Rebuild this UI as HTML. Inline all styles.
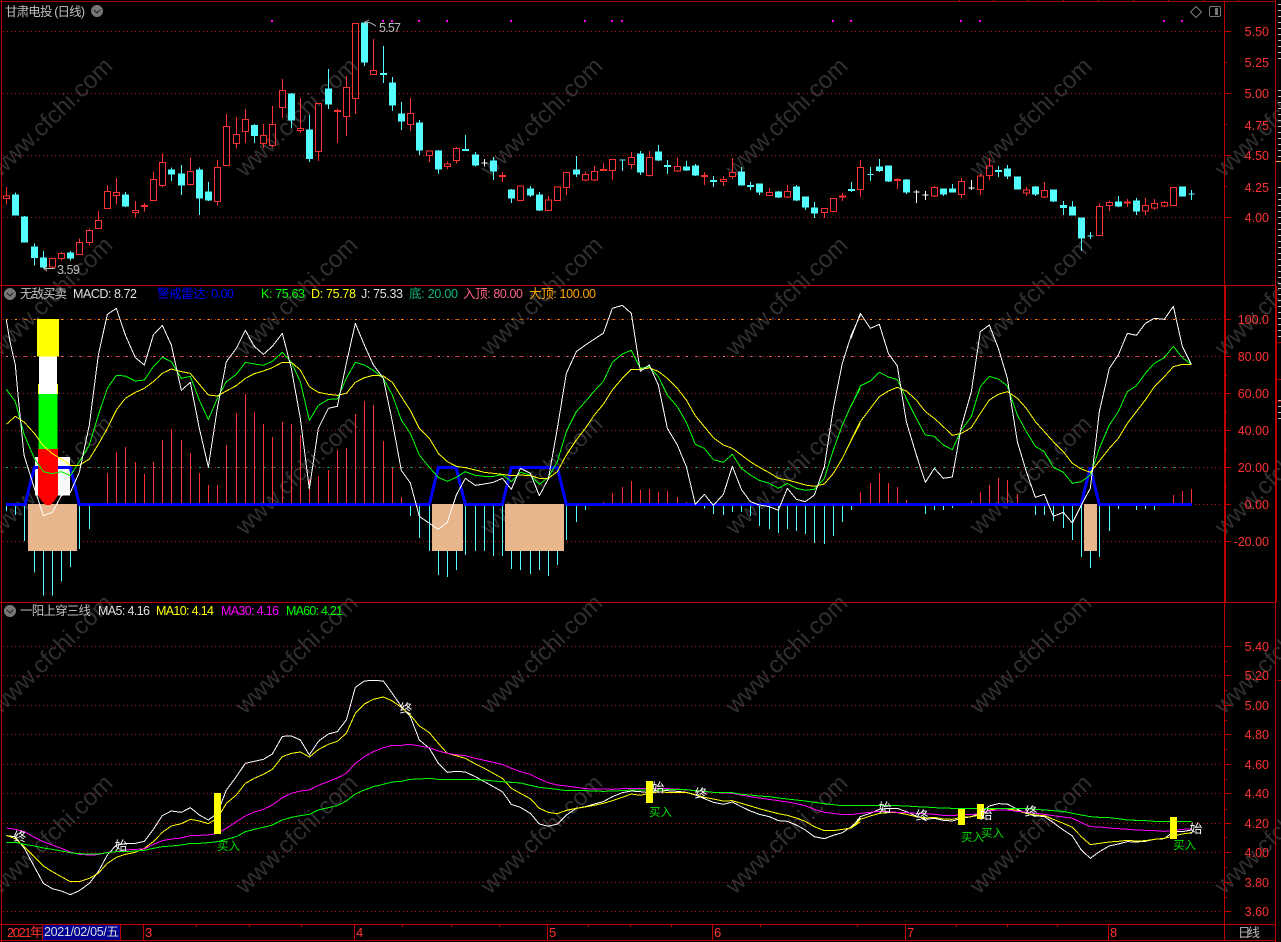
<!DOCTYPE html>
<html lang="zh"><head><meta charset="utf-8"><title>甘肃电投 (日线)</title>
<style>
html,body{margin:0;padding:0;background:#000;overflow:hidden;width:1281px;height:942px}
svg{display:block;position:absolute;left:0;top:0}
text{font-family:"Liberation Sans","Noto Sans CJK SC",sans-serif;shape-rendering:auto}
.k{fill:none;stroke-width:3}
.l{fill:none;stroke-width:3;stroke-linejoin:round}
.r{stroke:#ff3232;fill:none;stroke-width:3}
.c{stroke:#54ffff;fill:#54ffff;stroke-width:3}
.w{stroke:#fff;fill:#fff;stroke-width:3}
.bl{stroke:#0000ff;stroke-width:9;fill:none}
.ye{stroke:#ffff00}.wh{stroke:#fff}.gr{stroke:#00ff00}.ma{stroke:#ff00ff}
.ax{font-size:12.5px;fill:#ff3232;text-anchor:end}
.hd{font-size:12.5px}
.sg{font-size:12.5px;fill:#fff;text-anchor:middle}
.by{font-size:11.5px;fill:#00e000}
.mark{font-size:24px;fill:#303030}
</style></head><body>
<svg width="1281" height="942" viewBox="0 0 1281 942" shape-rendering="crispEdges" xmlns="http://www.w3.org/2000/svg">
<rect width="1281" height="942" fill="#000"/>

<!-- watermark -->
<g class="mark">
<text transform="translate(0,178) rotate(-44)">www.cfchi.com</text>
<text transform="translate(245,178) rotate(-44)">www.cfchi.com</text>
<text transform="translate(490,178) rotate(-44)">www.cfchi.com</text>
<text transform="translate(735,178) rotate(-44)">www.cfchi.com</text>
<text transform="translate(979,178) rotate(-44)">www.cfchi.com</text>
<text transform="translate(1224,178) rotate(-44)">www.cfchi.com</text>
<text transform="translate(0,357) rotate(-44)">www.cfchi.com</text>
<text transform="translate(245,357) rotate(-44)">www.cfchi.com</text>
<text transform="translate(490,357) rotate(-44)">www.cfchi.com</text>
<text transform="translate(735,357) rotate(-44)">www.cfchi.com</text>
<text transform="translate(979,357) rotate(-44)">www.cfchi.com</text>
<text transform="translate(1224,357) rotate(-44)">www.cfchi.com</text>
<text transform="translate(0,536) rotate(-44)">www.cfchi.com</text>
<text transform="translate(245,536) rotate(-44)">www.cfchi.com</text>
<text transform="translate(490,536) rotate(-44)">www.cfchi.com</text>
<text transform="translate(735,536) rotate(-44)">www.cfchi.com</text>
<text transform="translate(979,536) rotate(-44)">www.cfchi.com</text>
<text transform="translate(1224,536) rotate(-44)">www.cfchi.com</text>
<text transform="translate(0,715) rotate(-44)">www.cfchi.com</text>
<text transform="translate(245,715) rotate(-44)">www.cfchi.com</text>
<text transform="translate(490,715) rotate(-44)">www.cfchi.com</text>
<text transform="translate(735,715) rotate(-44)">www.cfchi.com</text>
<text transform="translate(979,715) rotate(-44)">www.cfchi.com</text>
<text transform="translate(1224,715) rotate(-44)">www.cfchi.com</text>
<text transform="translate(0,895) rotate(-44)">www.cfchi.com</text>
<text transform="translate(245,895) rotate(-44)">www.cfchi.com</text>
<text transform="translate(490,895) rotate(-44)">www.cfchi.com</text>
<text transform="translate(735,895) rotate(-44)">www.cfchi.com</text>
<text transform="translate(979,895) rotate(-44)">www.cfchi.com</text>
<text transform="translate(1224,895) rotate(-44)">www.cfchi.com</text>
</g>

<!-- grid -->
<g fill="none" stroke="#bb1414" stroke-width="1" stroke-dasharray="1 3">
<path d="M3 31.5H1222M3 93.5H1222M3 155.5H1222M3 217.5H1222"/>
<path d="M3 319.5H1222M3 356.5H1222M3 393.5H1222M3 430.5H1222M3 467.5H1222M3 541.5H1222"/>
<path d="M3 646.5H1222M3 675.5H1222M3 705.5H1222M3 734.5H1222M3 764.5H1222M3 793.5H1222M3 823.5H1222M3 852.5H1222M3 882.5H1222M3 911.5H1222"/>
<path d="M1191 504.5H1222"/>
</g>
<g fill="none" stroke-width="1" stroke-dasharray="2 7.19">
<path d="M6 319.5H1192" stroke="#ff9a10"/>
<path d="M6 356.5H1192" stroke="#ff6688"/>
<path d="M6 467.5H1192" stroke="#10b878"/>
</g>

<!-- magenta dots -->
<path fill="#ff00ff" d="M271 20h2v2h-2zM382 20h2v2h-2zM391 20h2v2h-2zM418 20h2v2h-2zM446 20h2v2h-2zM510 20h2v2h-2zM584 20h2v2h-2zM611 20h2v2h-2zM621 20h2v2h-2zM832 20h2v2h-2zM850 20h2v2h-2zM960 20h2v2h-2zM979 20h2v2h-2zM1163 20h2v2h-2zM1181 20h2v2h-2z"/>

<!-- candles -->
<g transform="scale(.33333)">
<path class="r" d="M19 561V588M19 596V614M10 588H28V596H10ZM148 775H166V801H148ZM157 801V805M184 756V760M184 776V782M175 760H193V776H175ZM238 715V727M229 727H247V764H229ZM268 685V691M268 728V737M259 691H277V728H259ZM295 633V661M286 661H304V685H286ZM322 556V574M313 574H331V626H313ZM349 534V577M349 586V614M340 577H358V586H340ZM406 603V631M406 637V652M397 631H415V637H397ZM433 609V635M424 616H442V619H424ZM460 514V538M451 538H469V602H451ZM487 460V487M487 557V561M478 487H496V557H478ZM571 472V514M571 554V557M562 514H580V554H562ZM652 480V502M652 605V617M643 502H661V605H643ZM679 342V379M670 379H688V497H670ZM709 351V403M709 431V446M700 403H718V431H700ZM736 327V358M736 394V429M727 358H745V394H727ZM790 372V406M790 431V444M781 406H799V431H781ZM817 318V373M817 437V443M808 373H826V437H808ZM847 237V271M847 323V354M838 271H856V323H838ZM901 294V385M901 392V399M892 385H910V392H892ZM946 310H964V455H946ZM955 455V483M1012 325V429M1003 331H1021V334H1003ZM1039 228V262M1039 350V408M1030 262H1048V350H1030ZM1057 70H1075V296H1057ZM1066 296V342M1120 117V211M1111 211H1129V224H1111ZM1231 294V340M1231 374V393M1222 340H1240V374H1222ZM1279 453H1297V467H1279ZM1288 467V486"/>
<path class="c" d="M46 577V647M37 585H55V645H37ZM73 648V728M64 651H82V726H64ZM103 730V797M94 741H112V773H94ZM130 753V805M121 774H139V801H121ZM211 753V782M202 759H220V774H202ZM376 576V621M367 585H385V618H367ZM514 502V543M505 510H523V522H505ZM544 495V585M535 522H553V555H535ZM598 502V645M589 510H607V594H589ZM625 546V603M616 576H634V600H616ZM763 372V429M754 376H772V407H754ZM874 279V384M865 282H883V360H865ZM928 345V486M919 390H937V476H919ZM985 207V327M976 267H994V312H976ZM1093 69V198M1084 69H1102V186H1084ZM1150 138V249M1141 220H1159V223H1141ZM1177 231V333M1168 249H1186V315H1168ZM1204 306V390M1195 342H1213V363H1195ZM1258 360V465M1249 369H1267V450H1249Z"/>
</g>
<g transform="translate(430,0) scale(.33333)">
<path class="r" d="M52 484V492M52 500V507M43 492H61V500H43ZM79 441V445M79 482V491M70 445H88V482H70ZM217 516V546M208 526H226V529H208ZM271 556V558M262 558H280V602H262ZM355 588V600M346 600H364V632H346ZM373 561H391V602H373ZM409 514V517M409 563V585M400 517H418V563H400ZM466 514V523M466 540V545M457 523H475V540H457ZM493 498V514M493 540V543M484 514H502V540H484ZM520 489V513M511 509H529V512H511ZM547 477V478M547 512V540M538 478H556V512H538ZM604 456V472M604 494V507M595 472H613V494H595ZM658 453V472M658 527V530M649 472H667V527H649ZM742 472V500M742 513V516M733 500H751V513H733ZM823 516V555M814 526H832V529H814ZM880 528V538M880 544V558M871 538H889V544H871ZM907 474V517M907 530V537M898 517H916V530H898ZM1018 564V577M1018 586V588M1009 577H1027V586H1009ZM1072 555V574M1072 591V594M1063 574H1081V591H1063ZM1174 625H1192V638H1174ZM1183 638V654M1201 595H1219V635H1201ZM1237 579V603M1228 588H1246V591H1228Z"/>
<path class="c" d="M25 450V522M16 453H34V507H16ZM106 405V453M97 448H115V451H97ZM136 456V500M127 465H145V495H127ZM190 471V540M181 483H199V513H181ZM244 567V609M235 570H253V594H235ZM301 558V591M292 567H310V585H292ZM328 576V633M319 585H337V630H319ZM439 468V531M430 510H448V522H430ZM577 478V513M568 480H586M631 453V525M622 462H640V516H622ZM685 435V483M676 456H694V480H676ZM712 480V522M703 496H721V499H703ZM769 483V513M760 501H778V510H760ZM796 492V528M787 498H805V525H787ZM850 528V561M841 542H859V544H841ZM934 501V555M925 516H943V555H925ZM961 546V570M952 556H970V559H952ZM988 552V585M979 552H997V576H979ZM1045 573V594M1036 576H1054V591H1036ZM1099 555V603M1090 561H1108V600H1090ZM1126 591V630M1117 591H1135V621H1117ZM1153 606V654M1144 624H1162V639H1144ZM1264 546V576M1255 568H1273V571H1255Z"/>
<path class="w" d="M163 477V500M154 489H172"/>
</g>
<g transform="translate(851,0) scale(.33333)">
<path class="r" d="M28 480V502M28 569V591M19 502H37V569H19ZM139 534V567M130 539H148V542H130ZM250 558V562M250 588V591M241 562H259V588H241ZM331 534V544M331 584V594M322 544H340V584H322ZM388 522V528M388 569V585M379 528H397V569H379ZM415 474V498M415 527V540M406 498H424V527H406ZM526 561V570M526 579V588M517 570H535V579H517ZM580 546V571M580 591V594M571 571H589V591H571ZM745 610V619M736 619H754V707H736ZM775 603V607M775 617V633M766 607H784V617H766ZM829 597V621M820 606H838V609H820ZM883 594V616M883 633V645M874 616H892V633H874ZM910 597V610M910 624V630M901 610H919V624H901ZM940 603V607M940 618V621M931 607H949V618H931ZM958 562H976V617H958Z"/>
<path class="c" d="M58 501V543M49 524H67M85 477V516M76 501H94V511H76ZM112 498V546M103 498H121V543H103ZM166 537V582M157 540H175V576H157ZM277 567V588M268 567H286V582H268ZM304 552V576M295 567H313V576H295ZM442 498V531M433 512H451V514H433ZM469 495V537M460 507H478V528H460ZM490 531H508V567H490ZM553 558V588M544 561H562V582H544ZM607 570V606M598 570H616V603H598ZM637 603V645M628 616H646V622H628ZM664 603V645M655 621H673V645H655ZM691 654V753M682 654H700V714H682ZM718 696V717M709 708H727M802 588V621M793 606H811V618H793ZM856 594V645M847 603H865V633H847ZM985 561H1003V588H985ZM1021 570V600M1012 582H1030"/>
<path class="w" d="M196 570V609M187 576H205M223 573V600M214 585H232M361 540V570M352 564H370"/>
</g>

<!-- hi/lo annotations -->
<g fill="none" stroke="#bbb" stroke-width="1">
<path d="M44 268.5H55M47 266l-3 2.5 3 2.5"/>
<path d="M376 26l-5-3-6-1M369 20l-4 2 2 3"/>
</g>
<text x="57" y="274" font-size="12.5" fill="#bbb" textLength="23">3.59</text>
<text x="379" y="32" font-size="12.5" fill="#bbb" textLength="22">5.57</text>

<!-- pane 2 bars -->
<g transform="translate(0,285) scale(.33333)">
<path class="k" stroke="#ff3232" d="M322 655V564M349 655V501M376 655V486M406 655V531M433 655V567M460 655V531M487 655V465M514 655V432M544 655V465M571 655V504M598 655V564M625 655V600M652 655V600M679 655V480M709 655V384M736 655V327M763 655V381M790 655V417M817 655V456M847 655V411M874 655V417M901 655V450M928 655V582M955 655V573M985 655V555M1012 655V495M1039 655V489M1066 655V387M1093 655V348M1120 655V360M1150 655V468M1177 655V549M1204 655V636"/>
<path class="k" stroke="#54ffff" d="M19 660V678M46 660V690M73 660V768M103 660V863M130 660V932M157 660V932M184 660V890M211 660V846M238 660V792M268 660V732M1231 660V693M1258 660V759M1288 660V798"/>
</g>
<g transform="translate(430,285) scale(.33333)">
<path class="k" stroke="#ff3232" d="M520 655V651M547 655V624M577 655V606M604 655V588M631 655V615M658 655V612M685 655V621M712 655V618M742 655V636M769 655V651"/>
<path class="k" stroke="#54ffff" d="M25 660V870M52 660V876M79 660V855M106 660V810M136 660V798M163 660V798M190 660V813M217 660V813M244 660V852M271 660V855M301 660V867M328 660V855M355 660V873M382 660V840M409 660V765M439 660V711M466 660V675M823 660V670M850 660V687M880 660V690M907 660V681M934 660V681M961 660V693M988 660V723M1018 660V732M1045 660V744M1072 660V732M1099 660V738M1126 660V747M1153 660V774M1183 660V777M1210 660V753M1237 660V711M1264 660V675"/>
</g>
<g transform="translate(851,285) scale(.33333)">
<path class="k" stroke="#ff3232" d="M28 655V621M58 655V594M85 655V564M112 655V594M139 655V606M166 655V645M361 655V648M388 655V621M415 655V600M442 655V579M469 655V585M499 655V627M967 655V630M994 655V618M1021 655V612"/>
<path class="k" stroke="#54ffff" d="M1 660V675M223 660V687M250 660V675M277 660V675M304 660V669M553 660V690M580 660V690M607 660V708M637 660V729M664 660V765M691 660V816M718 660V849M745 660V816M775 660V738M802 660V672M856 660V675M883 660V672M910 660V675"/>
</g>

<!-- pane 2 blocks and blue line -->
<g transform="translate(0,285) scale(.33333)">
<rect x="105" y="516" width="105" height="116" fill="#f8f8f8"/>
<path class="bl" d="M18 658.5H75L103 547H211L238 658.5H1290"/>
<rect x="84" y="657" width="147" height="141" fill="#e8b68c"/>
<rect x="111" y="102" width="66" height="113" fill="#ffff00"/>
<rect x="114" y="297" width="60" height="30" fill="#ffff00"/>
<rect x="117" y="215" width="54" height="112" fill="#fff"/>
<rect x="116" y="327" width="56" height="165" fill="#00ff00"/>
<path fill="#ff0000" d="M114 492H174V628Q165 650 150 660H138Q123 650 114 628Z"/>
</g>
<g transform="translate(430,285) scale(.33333)">
<path class="bl" d="M-2 658.5L25 547H78L106 658.5H217L244 547H382L409 658.5H1291"/>
<rect x="6" y="657" width="93" height="141" fill="#e8b68c"/>
<rect x="225" y="657" width="177" height="141" fill="#e8b68c"/>
</g>
<g transform="translate(851,285) scale(.33333)">
<path class="bl" d="M0 658.5H690L718 547L745 658.5H1023"/>
<rect x="699" y="657" width="39" height="141" fill="#e8b68c"/>
</g>

<!-- pane 2 lines -->
<g transform="translate(0,285) scale(.33333)">
<polyline class="l gr" points="19,313 46,350 73,450 103,520 130,560 157,566 184,560 211,572 238,530 268,480 295,390 322,310 349,271 376,273 406,288 433,285 460,245 487,217 514,230 544,280 571,274 598,345 625,404 652,340 679,290 709,268 736,232 763,237 790,241 817,229 847,202 874,232 901,290 928,406 955,361 985,343 1012,342 1039,280 1066,232 1093,240 1120,256 1150,280 1177,330 1204,405 1231,445 1258,510 1288,547"/>
<polyline class="l ye" points="19,418 46,394 73,412 103,445 130,482 157,506 184,522 211,541 238,541 268,522 295,478 322,430 349,375 376,340 406,322 433,310 460,290 487,265 514,252 544,260 571,265 598,298 625,330 652,333 679,318 709,302 736,280 763,266 790,258 817,248 847,232 874,232 901,255 928,305 955,322 985,328 1012,331 1039,325 1066,292 1093,278 1120,271 1150,273 1177,292 1204,335 1231,376 1258,430 1288,460"/>
<polyline class="l wh" points="19,105 30,170 46,240 55,340 72,510 100,600 130,692 157,682 184,632 211,622 238,562 268,420 295,210 322,88 349,70 376,150 406,218 433,240 460,150 487,121 514,180 544,316 571,292 598,430 625,546 652,370 679,230 709,190 736,136 763,184 790,208 817,184 847,145 874,250 901,400 928,612 955,430 985,370 1012,364 1039,235 1066,115 1093,180 1120,240 1150,280 1177,410 1204,556 1231,594 1258,694 1288,715"/>
</g>
<g transform="translate(430,285) scale(.33333)">
<polyline class="l gr" points="-2,547 25,577 52,589 79,577 106,560 136,571 163,574 190,574 217,569 244,590 271,562 301,570 328,598 355,577 382,530 409,440 439,380 466,350 493,318 520,289 547,232 577,207 604,196 631,250 658,245 685,275 712,330 742,365 769,412 796,478 823,490 850,524 880,532 907,508 934,550 961,570 988,586 1018,595 1045,610 1072,595 1099,610 1126,616 1153,613 1183,580 1210,495 1237,420 1264,360 1291,310"/>
<polyline class="l ye" points="-2,460 25,505 52,530 79,544 106,548 136,555 163,562 190,565 217,568 244,572 271,570 301,572 328,580 355,580 382,560 409,510 439,465 466,430 493,390 520,358 547,315 577,280 604,253 631,253 658,249 685,259 712,280 742,310 769,345 796,392 823,425 850,458 880,480 907,490 934,510 961,530 988,547 1018,563 1045,580 1072,585 1099,592 1126,600 1153,604 1183,597 1210,565 1237,520 1264,465 1291,415"/>
<polyline class="l wh" points="-2,715 25,733 52,712 79,630 106,580 136,601 163,597 190,592 217,580 244,613 271,550 301,565 328,632 355,582 382,430 409,265 439,200 466,180 493,162 520,145 547,70 577,61 604,85 631,259 658,240 685,300 712,430 742,480 769,545 796,658 823,628 850,661 880,628 907,544 934,613 961,650 988,660 1018,665 1045,676 1072,610 1099,643 1126,650 1153,630 1183,545 1210,370 1237,235 1264,150 1291,90"/>
</g>
<g transform="translate(851,285) scale(.33333)">
<polyline class="l gr" points="0,365 28,303 58,288 85,262 112,276 139,284 166,340 196,400 223,450 250,454 277,480 304,494 331,435 361,395 388,305 415,274 442,282 469,303 499,390 526,440 553,484 580,500 607,547 637,562 664,595 691,590 718,570 745,490 775,420 802,380 829,320 856,302 883,265 910,235 940,218 967,184 994,218 1021,238"/>
<polyline class="l ye" points="0,465 28,410 58,370 85,335 112,318 139,307 166,318 196,345 223,380 250,400 277,425 304,451 331,445 361,428 388,385 415,345 442,328 469,320 499,340 526,370 553,410 580,440 607,470 637,500 664,535 691,552 718,562 745,528 775,490 802,460 829,415 856,380 883,345 910,305 940,275 967,245 994,238 1021,238"/>
<polyline class="l wh" points="0,160 28,85 58,130 85,118 112,205 139,243 166,410 196,510 223,592 250,550 277,580 304,576 331,425 361,320 388,140 415,120 442,190 469,280 499,470 526,560 553,637 580,628 607,694 637,682 664,714 691,660 718,610 745,380 775,250 802,210 829,145 856,151 883,115 910,100 940,103 967,64 994,184 1021,238"/>
</g>

<!-- pane 3 lines -->
<g transform="translate(0,600) scale(.33333)">
<polyline class="l wh" points="19,707 45,710 73,745 103,800 130,850 157,866 184,873 211,884 238,872 268,850 295,815 322,765 349,735 376,731 406,730 433,724 460,688 487,647 514,633 544,637 571,623 598,645 625,660 652,640 679,570 709,530 736,490 763,484 790,478 817,462 847,409 874,408 901,420 928,465 955,424 985,402 1012,395 1039,360 1066,262 1093,243 1120,241 1150,243 1177,280 1204,320 1231,350 1258,420 1288,445"/>
<polyline class="l ye" points="19,706 46,716 73,740 103,770 130,798 157,815 184,830 211,845 238,845 268,835 295,820 322,790 349,772 376,763 406,757 433,745 460,725 487,697 514,678 544,671 571,658 598,663 625,671 652,655 679,610 709,585 736,550 763,535 790,523 817,508 847,470 874,460 901,456 928,471 955,449 985,433 1012,424 1039,400 1066,340 1093,312 1120,298 1150,291 1177,303 1204,322 1231,345 1258,378 1288,398"/>
<polyline class="l ma" points="19,684 46,688 73,695 103,712 130,725 157,735 184,745 211,756 238,763 268,765 295,764 322,757 349,755 376,750 406,748 433,747 460,733 487,722 514,717 544,714 571,707 598,706 625,705 652,700 679,685 709,665 736,648 763,636 790,628 817,615 847,593 874,580 901,573 928,570 955,556 985,545 1012,534 1039,520 1066,490 1093,470 1120,455 1150,443 1177,436 1204,436 1231,433 1258,438 1288,443"/>
<polyline class="l gr" points="19,727 46,727 73,733 103,738 130,744 157,748 184,753 211,758 238,761 268,762 295,762 322,758 349,755 376,755 406,753 433,751 460,745 487,740 514,738 544,735 571,730 598,730 625,728 652,725 679,718 709,710 736,695 763,688 790,682 817,675 847,660 874,652 901,647 928,643 955,630 985,623 1012,617 1039,603 1066,582 1093,570 1120,560 1150,553 1177,546 1204,544 1231,538 1258,537 1288,535"/>
</g>
<g transform="translate(430,600) scale(.33333)">
<polyline class="l wh" points="-2,445 25,490 52,517 79,514 106,516 136,530 163,545 190,560 217,575 244,613 271,622 301,640 328,672 355,679 382,672 409,645 439,625 466,620 493,612 520,605 547,590 577,578 604,573 631,575 658,578 685,570 712,572 742,574 769,577 796,585 823,596 850,607 880,613 907,606 934,620 961,633 988,643 1018,650 1045,662 1072,664 1099,675 1126,690 1153,710 1183,716 1210,706 1237,698 1264,680 1291,655"/>
<polyline class="l ye" points="-2,398 25,430 52,460 79,467 106,475 136,492 163,505 190,520 217,535 244,565 271,580 301,596 328,625 355,637 382,641 409,631 439,625 466,621 493,616 520,610 547,602 577,592 604,582 631,586 658,580 685,576 712,577 742,577 769,577 796,584 823,592 850,597 880,603 907,602 934,610 961,618 988,626 1018,634 1045,641 1072,646 1099,654 1126,664 1153,680 1183,692 1210,692 1237,688 1264,684 1291,665"/>
<polyline class="l ma" points="-2,443 25,453 52,460 79,464 106,467 136,475 163,481 190,487 217,493 244,505 271,515 301,523 328,537 355,548 382,555 409,558 439,562 466,566 493,567 520,567 547,568 577,566 604,566 631,566 658,566 685,566 712,566 742,567 769,570 796,572 823,575 850,577 880,579 907,580 934,585 961,590 988,594 1018,598 1045,602 1072,606 1099,611 1126,617 1153,628 1183,637 1210,640 1237,644 1264,644 1291,640"/>
<polyline class="l gr" points="-2,535 25,538 52,539 79,539 106,539 136,539 163,540 190,543 217,545 244,547 271,549 301,556 328,562 355,565 382,568 409,572 439,572 466,572 493,573 520,574 547,573 577,572 604,570 631,570 658,570 685,570 712,569 742,569 769,569 796,572 823,574 850,577 880,578 907,578 934,583 961,585 988,588 1018,590 1045,594 1072,597 1099,600 1126,603 1153,607 1183,611 1210,614 1237,617 1264,617 1291,617"/>
</g>
<g transform="translate(851,600) scale(.33333)">
<polyline class="l wh" points="0,685 28,650 58,640 85,628 112,625 139,625 166,635 196,648 223,658 250,655 277,661 304,663 331,655 361,650 388,640 415,618 442,611 469,612 499,628 526,640 553,647 580,650 607,668 637,690 664,708 691,750 718,775 745,755 775,738 802,732 829,725 856,726 883,724 910,718 940,716 967,695 994,695 1021,690"/>
<polyline class="l ye" points="0,685 28,658 58,648 85,640 112,638 139,638 166,643 196,650 223,654 250,652 277,657 304,658 331,652 361,650 388,645 415,630 442,625 469,626 499,632 526,640 553,645 580,647 607,658 637,670 664,682 691,710 718,734 745,730 775,726 802,724 829,721 856,723 883,722 910,718 940,715 967,708 994,702 1021,698"/>
<polyline class="l ma" points="0,644 28,640 58,637 85,634 112,635 139,637 166,638 196,640 223,641 250,643 277,646 304,647 331,644 361,644 388,640 415,632 442,630 469,630 499,634 526,636 553,640 580,643 607,647 637,651 664,655 691,668 718,680 745,681 775,684 802,686 829,688 856,690 883,691 910,692 940,694 967,692 994,688 1021,687"/>
<polyline class="l gr" points="0,617 28,617 58,617 85,616 112,617 139,617 166,618 196,620 223,621 250,623 277,624 304,625 331,626 361,626 388,625 415,625 442,625 469,625 499,625 526,625 553,628 580,630 607,632 637,634 664,640 691,645 718,650 745,652 775,653 802,656 829,660 856,661 883,662 910,664 940,664 967,664 994,664 1021,664"/>
</g>

<!-- pane 3 yellow bars -->
<path fill="#ffff00" d="M214 793h7v41h-7zM646 781h7v22h-7zM958 809h7v16h-7zM977 804h7v15h-7zM1170 817h7v22h-7z"/>

<!-- pane 3 labels -->
<text class="sg" x="20" y="841">终</text>
<text class="sg" x="121" y="850">始</text>
<text class="sg" x="406" y="713">终</text>
<text class="sg" x="658" y="792">始</text>
<text class="sg" x="701" y="798">终</text>
<text class="sg" x="885" y="812">始</text>
<text class="sg" x="922" y="820">终</text>
<text class="sg" x="986" y="819">始</text>
<text class="sg" x="1031" y="816">终</text>
<text class="sg" x="1196" y="833">始</text>
<text class="by" x="217" y="850">买入</text>
<text class="by" x="649" y="816">买入</text>
<text class="by" x="961" y="841">买入</text>
<text class="by" x="981" y="837">买入</text>
<text class="by" x="1173" y="849">买入</text>

<!-- frame -->
<g fill="#c00000">
<rect x="1" y="0" width="1" height="942"/>
<rect x="0" y="1" width="1276" height="1" fill="#a00000"/>
<rect x="0" y="285" width="1276" height="1"/>
<rect x="0" y="602" width="1276" height="1"/>
<rect x="0" y="924" width="1276" height="1"/>
<rect x="0" y="940" width="1276" height="1"/>
<rect x="1224" y="1" width="1" height="940"/>
<rect x="1224" y="286" width="2" height="316"/>
<rect x="1275" y="0" width="1" height="942"/>
<rect x="1275" y="286" width="2" height="316"/>
</g>
<path fill="none" stroke="#c00000" d="M959.5 0V1M993.5 0V1M1028.5 0V1M1063.5 0V1M1098.5 0V1M1133.5 0V1M1168.5 0V1M1203.5 0V1M1238.5 0V1"/>

<!-- axis ticks -->
<path fill="none" stroke="#c00000" stroke-width="1" d="M1224 31.5h7M1224 93.5h7M1224 155.5h7M1224 217.5h7M1224 62.5h3M1224 124.5h3M1224 186.5h3
M1224 319.5h7M1224 356.5h7M1224 393.5h7M1224 430.5h7M1224 467.5h7M1224 504.5h7M1224 541.5h7M1224 338.5h3M1224 375.5h3M1224 412.5h3M1224 449.5h3M1224 486.5h3M1224 523.5h3
M1224 646.5h7M1224 675.5h7M1224 705.5h7M1224 734.5h7M1224 764.5h7M1224 793.5h7M1224 823.5h7M1224 852.5h7M1224 882.5h7M1224 911.5h7M1224 661.5h3M1224 690.5h3M1224 720.5h3M1224 749.5h3M1224 779.5h3M1224 809.5h3M1224 837.5h3M1224 867.5h3M1224 897.5h3"/>

<!-- axis labels -->
<g class="ax">
<text x="1269" y="36">5.50</text><text x="1269" y="67">5.25</text><text x="1269" y="98">5.00</text><text x="1269" y="130">4.75</text><text x="1269" y="160">4.50</text><text x="1269" y="192">4.25</text><text x="1269" y="222">4.00</text>
<text x="1269" y="324">100.0</text><text x="1269" y="361">80.00</text><text x="1269" y="398">60.00</text><text x="1269" y="435">40.00</text><text x="1269" y="472">20.00</text><text x="1269" y="509">0.00</text><text x="1269" y="546">-20.00</text>
<text x="1269" y="651">5.40</text><text x="1269" y="680">5.20</text><text x="1269" y="710">5.00</text><text x="1269" y="739">4.80</text><text x="1269" y="769">4.60</text><text x="1269" y="798">4.40</text><text x="1269" y="828">4.20</text><text x="1269" y="857">4.00</text><text x="1269" y="887">3.80</text><text x="1269" y="916">3.60</text>
</g>

<!-- far-right strip -->
<path fill="none" stroke="#bbb" stroke-width="3" stroke-dasharray="1 5" d="M1279.5 4V60M1279.5 90V160M1279.5 187V285M1279.5 288V345M1279.5 400V420"/>
<path fill="none" stroke="#a00000" stroke-width="1" d="M1277 342.5h4M1277 379.5h4M1277 401.5h4M1277 680.5h4"/>
<path fill="none" stroke="#ffa030" stroke-width="1" d="M1276 161.5h5"/>

<!-- header pane 1 -->
<text class="hd" x="5" y="16" fill="#c0c0c0" textLength="80">甘肃电投 (日线)</text>
<g>
<circle cx="97" cy="11" r="6" fill="#777"/>
<path d="M94 10l3 3 3-3" fill="none" stroke="#222" stroke-width="1"/>
<path d="M1196 6.5l5.5 5.5-5.5 5.5-5.5-5.5z" fill="none" stroke="#777" stroke-width="1"/>
<rect x="1209.5" y="6.5" width="11" height="10" rx="1.5" fill="none" stroke="#777" stroke-width="1"/>
<rect x="1215" y="8" width="3" height="7" fill="#777"/>
</g>

<!-- header pane 2 -->
<circle cx="10" cy="294" r="6" fill="#777"/>
<path d="M7 293l3 3 3-3" fill="none" stroke="#222" stroke-width="1"/>
<text class="hd" x="20" y="298" fill="#c0c0c0" textLength="47">无敌买卖</text>
<text class="hd" x="73" y="298" fill="#e0e0e0" textLength="64">MACD: 8.72</text>
<text class="hd" x="157" y="298" fill="#0000ff" textLength="77">警戒雷达: 0.00</text>
<text class="hd" x="261" y="298" fill="#00ff00" textLength="44">K: 75.63</text>
<text class="hd" x="311" y="298" fill="#ffff00" textLength="45">D: 75.78</text>
<text class="hd" x="361" y="298" fill="#e0e0e0" textLength="42">J: 75.33</text>
<text class="hd" x="409" y="298" fill="#10b878" textLength="49">底: 20.00</text>
<text class="hd" x="463" y="298" fill="#ff6688" textLength="60">入顶: 80.00</text>
<text class="hd" x="529" y="298" fill="#ffa500" textLength="67">大顶: 100.00</text>

<!-- header pane 3 -->
<circle cx="10" cy="611" r="6" fill="#777"/>
<path d="M7 610l3 3 3-3" fill="none" stroke="#222" stroke-width="1"/>
<text class="hd" x="20" y="615" fill="#c0c0c0" textLength="71">一阳上穿三线</text>
<text class="hd" x="98" y="615" fill="#e0e0e0" textLength="52">MA5: 4.16</text>
<text class="hd" x="156" y="615" fill="#ffff00" textLength="58">MA10: 4.14</text>
<text class="hd" x="221" y="615" fill="#ff00ff" textLength="58">MA30: 4.16</text>
<text class="hd" x="286" y="615" fill="#00ff00" textLength="57">MA60: 4.21</text>

<!-- bottom axis -->
<rect x="43" y="925" width="77" height="15" fill="#000090"/>
<path fill="none" stroke="#c00000" stroke-width="1" d="M42.5 925V940M120.5 925V940M143.5 925V940M354.5 925V940M547.5 925V940M712.5 925V940M905.5 925V940M1108.5 925V940M196.5 925v2M249.5 925v2M301.5 925v2M402.5 925v2M451.5 925v2M499.5 925v2M588.5 925v2M630.5 925v2M671.5 925v2M760.5 925v2M857.5 925v2M956.5 925v2M1007.5 925v2M1057.5 925v2"/>
<g font-size="13" fill="#ff3232">
<text x="7" y="937" textLength="36">2021年</text>
<text x="145" y="937">3</text><text x="356" y="937">4</text><text x="549" y="937">5</text><text x="714" y="937">6</text><text x="907" y="937">7</text><text x="1110" y="937">8</text>
</g>
<text x="44" y="936" font-size="12.5" fill="#ddd" textLength="75">2021/02/05/五</text>
<text x="1238" y="937" font-size="12.5" fill="#bbb" textLength="22">日线</text>
</svg>
</body></html>
